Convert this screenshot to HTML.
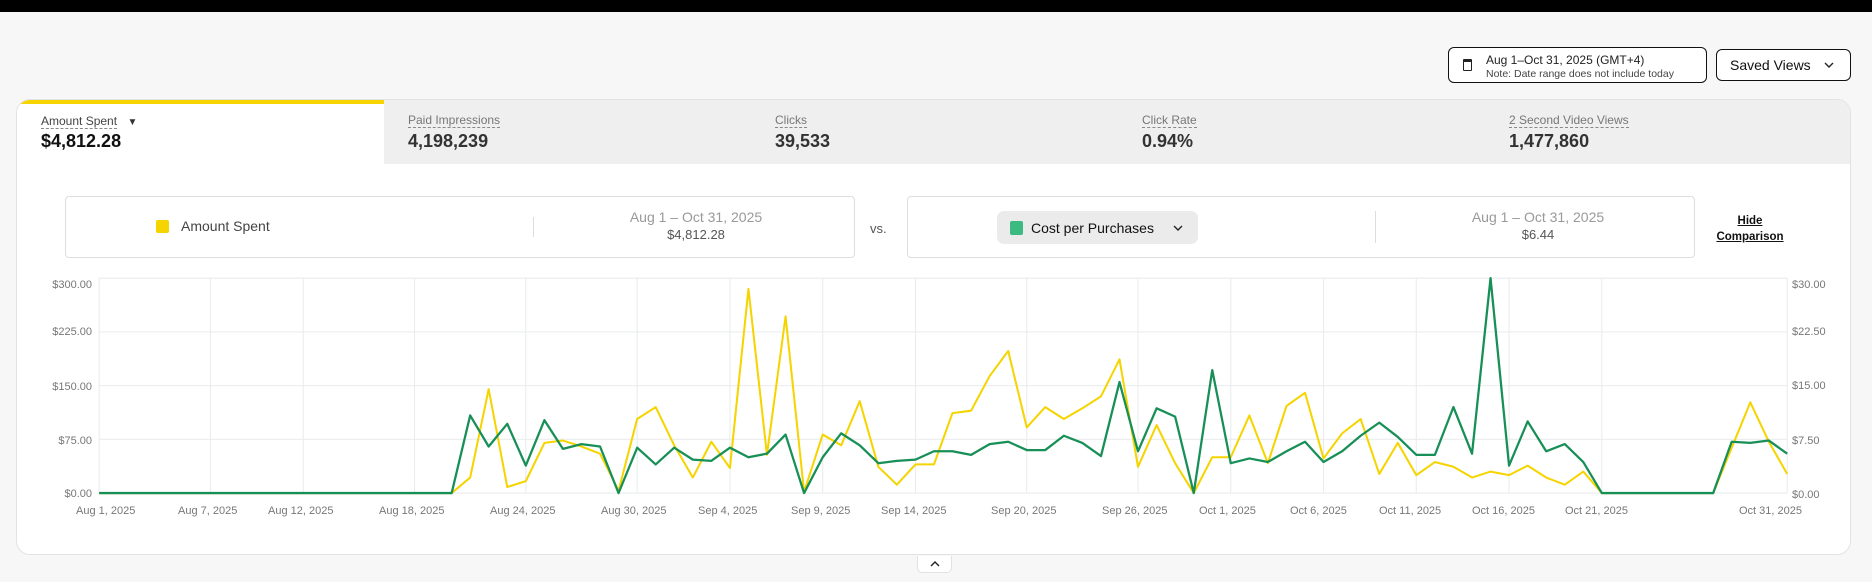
<!DOCTYPE html>
<html><head><meta charset="utf-8"><style>
*{margin:0;padding:0;box-sizing:border-box}
body{width:1872px;height:582px;background:#f7f7f7;font-family:"Liberation Sans",sans-serif;position:relative;overflow:hidden;color:#222}
.abs{position:absolute}
.top{left:0;top:0;width:1872px;height:12px;background:#000}
.btn{border:1.5px solid #111;border-radius:6px;background:#fff}
.card{left:16px;top:99px;width:1835px;height:456px;background:#fff;border:1px solid #e2e2e2;border-radius:14px;overflow:hidden}
.tabs{left:0;top:0;width:1835px;height:64px;background:#efefef}
.tab1{left:0;top:0;width:367px;height:64px;background:#fff;border-top:4px solid #f5d400}
.lbl{font-size:12px;color:#777;border-bottom:1px dashed #888;display:inline-block;line-height:14px}
.val{font-size:18px;font-weight:bold;color:#333}
.box{border:1px solid #ddd;border-radius:4px;background:#fff}
.ax{font-size:11px;color:#777}
</style></head><body>
<div class="abs top"></div>
<div class="abs btn" style="left:1448px;top:47px;width:259px;height:36px">
  <div class="abs" style="left:14px;top:11px;width:9px;height:12px;border:1.5px solid #222;border-radius:1px;border-top-width:3px"></div>
  <div class="abs" style="left:37px;top:5px;font-size:12px;color:#222">Aug 1–Oct 31, 2025 (GMT+4)</div>
  <div class="abs" style="left:37px;top:20px;font-size:10.5px;color:#444">Note: Date range does not include today</div>
</div>
<div class="abs btn" style="left:1716px;top:49px;width:135px;height:32px">
  <div class="abs" style="left:13px;top:7px;font-size:14px;color:#111">Saved Views</div>
  <svg class="abs" style="left:107px;top:11px" width="10" height="8"><path d="M1 2 L5 6 L9 2" stroke="#222" stroke-width="1.4" fill="none"/></svg>
</div>
<div class="abs card">
  <div class="abs tabs"></div>
  <div class="abs tab1"></div>
  <div class="abs" style="left:24px;top:12px"><span class="lbl" style="color:#444">Amount Spent</span> <span style="font-size:10px;color:#333;margin-left:6px">▼</span></div>
  <div class="abs val" style="left:24px;top:31px;color:#111">$4,812.28</div>
  <div class="abs" style="left:391px;top:11px"><span class="lbl">Paid Impressions</span></div>
  <div class="abs val" style="left:391px;top:31px">4,198,239</div>
  <div class="abs" style="left:758px;top:11px"><span class="lbl">Clicks</span></div>
  <div class="abs val" style="left:758px;top:31px">39,533</div>
  <div class="abs" style="left:1125px;top:11px"><span class="lbl">Click Rate</span></div>
  <div class="abs val" style="left:1125px;top:31px">0.94%</div>
  <div class="abs" style="left:1492px;top:11px"><span class="lbl">2 Second Video Views</span></div>
  <div class="abs val" style="left:1492px;top:31px">1,477,860</div>

  <div class="abs box" style="left:48px;top:96px;width:790px;height:62px">
    <div class="abs" style="left:90px;top:23px;width:13px;height:13px;background:#f5d400;border-radius:2px"></div>
    <div class="abs" style="left:115px;top:21px;font-size:14px;color:#444">Amount Spent</div>
    <div class="abs" style="left:467px;top:20px;width:1px;height:20px;background:#ddd"></div>
    <div class="abs" style="left:480px;top:12px;width:300px;text-align:center;font-size:14px;color:#999">Aug 1 – Oct 31, 2025</div>
    <div class="abs" style="left:480px;top:30px;width:300px;text-align:center;font-size:13px;color:#555">$4,812.28</div>
  </div>
  <div class="abs" style="left:853px;top:121px;font-size:13px;color:#555">vs.</div>
  <div class="abs box" style="left:890px;top:96px;width:788px;height:62px">
    <div class="abs" style="left:89px;top:14px;width:201px;height:33px;background:#ebebeb;border-radius:7px">
      <div class="abs" style="left:13px;top:10px;width:13px;height:14px;background:#3dba82;border-radius:2px"></div>
      <div class="abs" style="left:34px;top:9px;font-size:14px;color:#111">Cost per Purchases</div>
      <svg class="abs" style="left:176px;top:13px" width="10" height="8"><path d="M1 2 L5 6 L9 2" stroke="#222" stroke-width="1.4" fill="none"/></svg>
    </div>
    <div class="abs" style="left:467px;top:14px;width:1px;height:32px;background:#ddd"></div>
    <div class="abs" style="left:480px;top:12px;width:300px;text-align:center;font-size:14px;color:#999">Aug 1 – Oct 31, 2025</div>
    <div class="abs" style="left:480px;top:30px;width:300px;text-align:center;font-size:13px;color:#555">$6.44</div>
  </div>
  <div class="abs" style="left:1698px;top:113px;width:70px;text-align:center;font-size:11.5px;font-weight:bold;text-decoration:underline;line-height:16px;color:#111">Hide<br>Comparison</div>
</div>

<svg class="abs" style="left:0;top:0" width="1872" height="582" viewBox="0 0 1568 487.5">
  <g stroke="#e9ecee" stroke-width="0.9">
    <line x1="83" y1="233" x2="1497" y2="233"/><line x1="83" y1="278" x2="1497" y2="278"/>
    <line x1="83" y1="323" x2="1497" y2="323"/><line x1="83" y1="368" x2="1497" y2="368"/>
    <line x1="83" y1="413" x2="1497" y2="413"/>
    <line x1="83" y1="233" x2="83" y2="413"/><line x1="176.2" y1="233" x2="176.2" y2="413"/>
    <line x1="254" y1="233" x2="254" y2="413"/><line x1="347.2" y1="233" x2="347.2" y2="413"/>
    <line x1="440.4" y1="233" x2="440.4" y2="413"/><line x1="533.7" y1="233" x2="533.7" y2="413"/>
    <line x1="611.4" y1="233" x2="611.4" y2="413"/><line x1="689.1" y1="233" x2="689.1" y2="413"/>
    <line x1="766.8" y1="233" x2="766.8" y2="413"/><line x1="860" y1="233" x2="860" y2="413"/>
    <line x1="953.2" y1="233" x2="953.2" y2="413"/><line x1="1030.9" y1="233" x2="1030.9" y2="413"/>
    <line x1="1108.6" y1="233" x2="1108.6" y2="413"/><line x1="1186.3" y1="233" x2="1186.3" y2="413"/>
    <line x1="1264" y1="233" x2="1264" y2="413"/><line x1="1341.7" y1="233" x2="1341.7" y2="413"/>
    <line x1="1497" y1="233" x2="1497" y2="413"/>
  </g>
  <polyline fill="none" stroke="#f5d400" stroke-width="1.7" stroke-linejoin="round" points="83,413 378.3,413 393.8,400 409.3,326 424.9,408 440.4,403 456,371 471.5,369 487,374 502.6,380 518.1,411 533.7,351 549.2,341 564.7,373 580.3,400 595.8,370 611.4,392 626.9,242 642.4,381 658,265 673.5,412 689.1,364 704.6,373 720.1,336 735.7,391 751.2,406 766.8,389 782.3,389 797.8,346 813.4,344 828.9,315 844.5,294 860,358 875.5,341 891.1,351 906.6,342 922.2,332 937.7,301 953.2,391 968.8,356 984.3,388 999.9,413 1015.4,383 1030.9,383 1046.5,348 1062,388 1077.6,340 1093.1,329 1108.6,384 1124.2,363 1139.7,351 1155.3,397 1170.8,371 1186.3,398 1201.9,387 1217.4,391 1233,400 1248.5,395 1264,398 1279.6,390 1295.1,400 1310.7,406 1326.2,395 1341.7,413 1435,413 1450.5,375 1466.1,337 1481.6,370 1497,397"/>
  <polyline fill="none" stroke="#178f57" stroke-width="1.9" stroke-linejoin="round" points="83,413 378.3,413 393.8,348 409.3,374 424.9,355 440.4,390 456,352 471.5,376 487,372 502.6,374 518.1,413 533.7,375 549.2,389 564.7,375 580.3,385 595.8,386 611.4,375 626.9,383 642.4,380 658,364 673.5,413 689.1,383 704.6,363 720.1,373 735.7,388 751.2,386 766.8,385 782.3,378 797.8,378 813.4,381 828.9,372 844.5,370 860,377 875.5,377 891.1,365 906.6,371 922.2,382 937.7,320 953.2,378 968.8,342 984.3,349 999.9,413 1015.4,310 1030.9,388 1046.5,384 1062,387 1077.6,378 1093.1,370 1108.6,387 1124.2,378 1139.7,365 1155.3,354 1170.8,366 1186.3,381 1201.9,381 1217.4,341 1233,380 1248.5,233 1264,390 1279.6,353 1295.1,378 1310.7,372 1326.2,387 1341.7,413 1435,413 1450.5,370 1466.1,371 1481.6,369 1497,380"/>
</svg>

<div class="abs ax" style="left:30px;top:279px;width:62px;text-align:right">$300.00</div>
<div class="abs ax" style="left:30px;top:326px;width:62px;text-align:right">$225.00</div>
<div class="abs ax" style="left:30px;top:381px;width:62px;text-align:right">$150.00</div>
<div class="abs ax" style="left:30px;top:435px;width:62px;text-align:right">$75.00</div>
<div class="abs ax" style="left:30px;top:488px;width:62px;text-align:right">$0.00</div>
<div class="abs ax" style="left:1792px;top:279px">$30.00</div>
<div class="abs ax" style="left:1792px;top:326px">$22.50</div>
<div class="abs ax" style="left:1792px;top:380px">$15.00</div>
<div class="abs ax" style="left:1792px;top:435px">$7.50</div>
<div class="abs ax" style="left:1792px;top:489px">$0.00</div>
<div class="abs ax" style="top:505px;left:0;width:1872px;height:14px">
  <span class="abs" style="left:76px">Aug 1, 2025</span>
  <span class="abs" style="left:178px">Aug 7, 2025</span>
  <span class="abs" style="left:268px">Aug 12, 2025</span>
  <span class="abs" style="left:379px">Aug 18, 2025</span>
  <span class="abs" style="left:490px">Aug 24, 2025</span>
  <span class="abs" style="left:601px">Aug 30, 2025</span>
  <span class="abs" style="left:698px">Sep 4, 2025</span>
  <span class="abs" style="left:791px">Sep 9, 2025</span>
  <span class="abs" style="left:881px">Sep 14, 2025</span>
  <span class="abs" style="left:991px">Sep 20, 2025</span>
  <span class="abs" style="left:1102px">Sep 26, 2025</span>
  <span class="abs" style="left:1199px">Oct 1, 2025</span>
  <span class="abs" style="left:1290px">Oct 6, 2025</span>
  <span class="abs" style="left:1379px">Oct 11, 2025</span>
  <span class="abs" style="left:1472px">Oct 16, 2025</span>
  <span class="abs" style="left:1565px">Oct 21, 2025</span>
  <span class="abs" style="left:1739px">Oct 31, 2025</span>
</div>
<div class="abs" style="left:917px;top:556px;width:35px;height:17px;background:#fff;border:1px solid #e2e2e2;border-top:none;border-radius:0 0 5px 5px">
  <svg class="abs" style="left:12px;top:4px" width="10" height="8"><path d="M1 6 L5 2 L9 6" stroke="#222" stroke-width="1.4" fill="none"/></svg>
</div>
</body></html>
